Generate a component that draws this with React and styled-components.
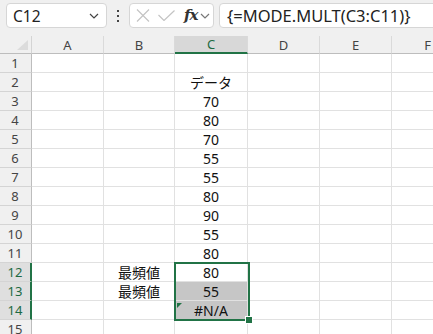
import React from "react";
import styled, { createGlobalStyle } from "styled-components";

const GREEN = "#217346";

const Global = createGlobalStyle`
  html, body { margin: 0; padding: 0; background: #fff; }
  body { font-family: "Noto Sans", "Noto Sans CJK JP", sans-serif; }
`;

const Frame = styled.div`
  width: 433px;
  height: 334px;
  overflow: hidden;
  background: #fff;
`;

const Toolbar = styled.div`
  height: 36px;
  background: #f0f0f0;
  display: flex;
  align-items: flex-start;
  padding: 3px 0 0 6px;
  box-sizing: border-box;
`;

const Box = styled.div`
  box-sizing: border-box;
  height: 25px;
  background: #fff;
  border: 1px solid #d6d6d6;
  border-radius: 4px;
  display: flex;
  align-items: center;
  flex: none;
  width: ${p => p.$w}px;
  margin-left: ${p => p.$ml || 0}px;
`;

const NameText = styled.span`
  flex: 1;
  padding-left: 6px;
  font-size: 15.5px;
  color: #222;
  font-family: "Noto Sans", sans-serif;
`;

const Dots = styled.div`
  width: 22px;
  height: 25px;
  display: flex;
  flex-direction: column;
  align-items: center;
  justify-content: center;
  gap: 3px;
  flex: none;
  span {
    width: 2px;
    height: 2px;
    background: #444;
  }
`;

const IconSlot = styled.div`
  display: flex;
  align-items: center;
  justify-content: center;
  margin-left: ${p => p.$ml || 0}px;
  margin-right: ${p => p.$mr || 0}px;
`;

const Fx = styled.span`
  font-family: "DejaVu Serif", "Liberation Serif", serif;
  font-style: italic;
  font-weight: bold;
  font-size: 15px;
  color: #333;
  letter-spacing: -1px;
  line-height: 1;
`;

const FormulaText = styled.span`
  padding-left: 7px;
  font-size: 16.5px;
  color: #222;
  white-space: nowrap;
  font-family: "Noto Sans", sans-serif;
`;

const Grid = styled.div`
  position: relative;
`;

const Row = styled.div`
  display: flex;
  height: ${p => (p.$head ? 18 : 19)}px;
`;

const Corner = styled.div`
  box-sizing: border-box;
  width: 32px;
  flex: none;
  background: #f0f0f0;
  border-right: 1px solid #d4d4d4;
  border-bottom: 1px solid #bdbdbd;
  position: relative;
  &::after {
    content: "";
    position: absolute;
    right: 3px;
    bottom: 3px;
    width: 0;
    height: 0;
    border-left: 11px solid transparent;
    border-bottom: 10px solid #dcdcdc;
  }
`;

const ColHead = styled.div`
  box-sizing: border-box;
  width: ${p => p.$w}px;
  flex: none;
  background: ${p => (p.$active ? "#d8d8d8" : "#f0f0f0")};
  border-right: 1px solid #dadada;
  border-bottom: ${p => (p.$active ? `2px solid ${GREEN}` : "1px solid #bdbdbd")};
  display: flex;
  align-items: center;
  justify-content: center;
  font-size: 13px;
  color: ${p => (p.$active ? "#1d6a42" : "#444")};
`;

const RowHead = styled.div`
  box-sizing: border-box;
  width: 32px;
  flex: none;
  background: ${p => (p.$active ? "#dfdfdf" : "#f0f0f0")};
  border-bottom: 1px solid #d4d4d4;
  border-right: ${p => (p.$active ? `2px solid ${GREEN}` : "1px solid #bdbdbd")};
  display: flex;
  align-items: center;
  justify-content: center;
  font-size: 13px;
  color: ${p => (p.$active ? "#1d6a42" : "#444")};
  padding-right: ${p => (p.$active ? 0 : 1)}px;
`;

const Cell = styled.div`
  box-sizing: border-box;
  width: ${p => p.$w}px;
  flex: none;
  background: ${p => p.$fill || "#fff"};
  border-right: 1px solid #e1e1e1;
  border-bottom: 1px solid #e1e1e1;
  display: flex;
  align-items: center;
  justify-content: center;
  font-size: 14px;
  color: #111;
  font-family: "Noto Sans", "Noto Sans CJK JP", sans-serif;
  position: relative;
  white-space: nowrap;
`;

const ErrorMark = styled.span`
  position: absolute;
  left: 2px;
  top: 2px;
  width: 0;
  height: 0;
  border-top: 5px solid ${GREEN};
  border-right: 5px solid transparent;
`;

const Selection = styled.div`
  position: absolute;
  left: 174px;
  top: 226px;
  width: 76px;
  height: 59px;
  box-sizing: border-box;
  border: 2px solid ${GREEN};
  pointer-events: none;
`;

const Handle = styled.div`
  position: absolute;
  right: -5px;
  bottom: -5px;
  width: 6px;
  height: 6px;
  background: ${GREEN};
  border: 1px solid #fff;
`;

const widths = [72, 71, 73, 72, 72, 72];
const letters = ["A", "B", "C", "D", "E", "F"];

const data = {
  2: { C: "データ" },
  3: { C: "70" },
  4: { C: "80" },
  5: { C: "70" },
  6: { C: "55" },
  7: { C: "55" },
  8: { C: "80" },
  9: { C: "90" },
  10: { C: "55" },
  11: { C: "80" },
  12: { B: "最頻値", C: "80" },
  13: { B: "最頻値", C: "55" },
  14: { C: "#N/A" },
};

const Chevron = ({ color = "#555" }) => (
  <svg width="10" height="6" viewBox="0 0 10 6">
    <path d="M1 1 L5 5 L9 1" fill="none" stroke={color} strokeWidth="1.2" />
  </svg>
);

export default function App() {
  const rows = Array.from({ length: 15 }, (_, i) => i + 1);
  return (
    <Frame>
      <Global />
      <Toolbar>
        <Box $w={101}>
          <NameText>C12</NameText>
          <IconSlot $mr={7}>
            <Chevron color="#444" />
          </IconSlot>
        </Box>
        <Dots>
          <span />
          <span />
          <span />
        </Dots>
        <Box $w={85}>
          <IconSlot $ml={6}>
            <svg width="14" height="13" viewBox="0 0 14 13">
              <path d="M1 0.5 L13 12.5 M13 0.5 L1 12.5" stroke="#c4c4c4" strokeWidth="1.2" fill="none" />
            </svg>
          </IconSlot>
          <IconSlot $ml={8}>
            <svg width="17" height="11" viewBox="0 0 17 11">
              <path d="M0.5 5 L6 10.5 L16.5 0.5" stroke="#c4c4c4" strokeWidth="1.2" fill="none" />
            </svg>
          </IconSlot>
          <IconSlot $ml={9}>
            <Fx>fx</Fx>
          </IconSlot>
          <IconSlot $ml={3}>
            <Chevron color="#777" />
          </IconSlot>
        </Box>
        <Box $w={240} $ml={5}>
          <FormulaText>{"{=MODE.MULT(C3:C11)}"}</FormulaText>
        </Box>
      </Toolbar>
      <Grid>
        <Row $head>
          <Corner />
          {letters.map((l, i) => (
            <ColHead key={l} $w={widths[i]} $active={l === "C"}>
              {l}
            </ColHead>
          ))}
        </Row>
        {rows.map(r => {
          const active = r >= 12 && r <= 14;
          return (
            <Row key={r}>
              <RowHead $active={active}>{r}</RowHead>
              {letters.map((l, i) => {
                const v = data[r] && data[r][l];
                const fill = l === "C" && (r === 13 || r === 14) ? "#c6c6c6" : undefined;
                return (
                  <Cell key={l} $w={widths[i]} $fill={fill}>
                    {r === 14 && l === "C" && <ErrorMark />}
                    {v}
                  </Cell>
                );
              })}
            </Row>
          );
        })}
        <Selection>
          <Handle />
        </Selection>
      </Grid>
    </Frame>
  );
}
